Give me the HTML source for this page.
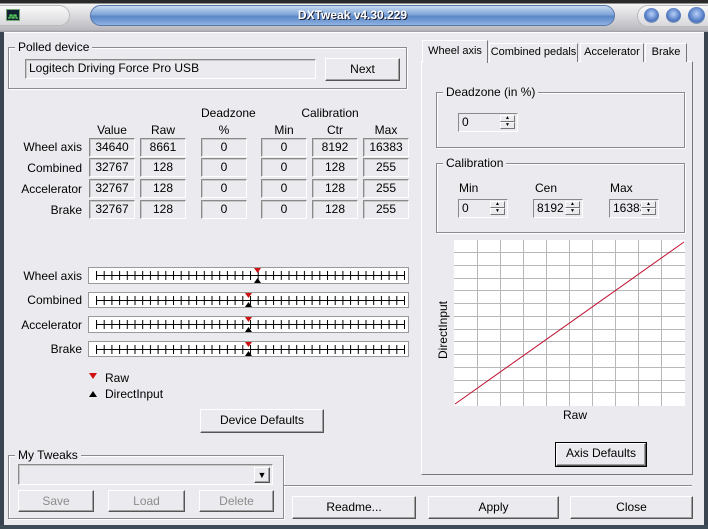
<!DOCTYPE html>
<html><head><meta charset="utf-8"><style>
*{box-sizing:border-box;margin:0;padding:0}
body{width:708px;height:529px;overflow:hidden;background:#3a4450;font-family:"Liberation Sans",sans-serif;font-size:12px;color:#000;position:relative}
.a{position:absolute}
#title{left:0;top:0;width:708px;height:32px;background:linear-gradient(#2a2a2a 0,#2a2a2a 3px,#f4f4f4 4px,#d9d9dd 16px,#b9b9bf 30px,#9a9aa0 32px)}
#pill{left:90px;top:5px;width:525px;height:21px;border-radius:11px;background:linear-gradient(#c8daf2,#7ea4d8 45%,#5a86c6 55%,#8fb2e2);border:1px solid #5a78a8;color:#fff;font-weight:bold;text-align:center;line-height:19px;font-size:12px;text-shadow:1px 1px 0 #223}
#icopill{left:-10px;top:5px;width:80px;height:21px;border-radius:11px;background:linear-gradient(#fafafa,#d8d8dc);border:1px solid #bbb}
#ico{left:6px;top:9px;width:14px;height:12px;background:#123;border:1px solid #7a7;}
#btns{left:637px;top:5px;width:80px;height:22px;border-radius:11px;background:linear-gradient(#fafafa,#d8d8dc);border:1px solid #bbb}
.cb{width:15px;height:15px;border-radius:50%;background:radial-gradient(circle at 50% 40%,#b8d0f8,#4a74c0 60%,#8a9ab0 75%,#ddd 80%);top:8px}
#dlg{left:4px;top:32px;width:700px;height:493px;background:#ebebef;border-top:1px solid #fff}
.grp{position:absolute;border:1px solid #8a8a90;box-shadow:1px 1px 0 #fff, inset 1px 1px 0 #fff}
.gl{position:absolute;background:#ebebef;padding:0 3px;top:-8px;left:6px;line-height:14px;white-space:nowrap}
.tb{position:absolute;border:1px solid #8a8a8a;border-right-color:#fff;border-bottom-color:#fff;box-shadow:inset 1px 1px 0 #c8c8c8;background:#ebebef;text-align:center;line-height:16px;height:19px}
.btn{position:absolute;border:1px solid #fff;border-right-color:#555;border-bottom-color:#555;box-shadow:inset -1px -1px 0 #a0a0a0;background:#ebebef;text-align:center;line-height:20px;white-space:nowrap}
.lab{position:absolute;text-align:right;width:80px;left:0}
.hd{position:absolute;text-align:center;width:46px}
.spin{position:absolute;height:19px;border:1px solid #8a8a8a;border-right-color:#fff;border-bottom-color:#fff;background:#ebebef;padding-left:3px;line-height:17px;overflow:hidden}
.sb{position:absolute;right:2px;width:15px;height:7px;border:1px solid #fff;border-right-color:#777;border-bottom-color:#777;background:#ebebef;font-size:5px;line-height:5px;text-align:center}
.tab{position:absolute;top:43px;height:19px;border:1px solid #fff;border-right-color:#777;border-bottom:none;background:#ebebef;text-align:center;line-height:17px;white-space:nowrap;font-size:11px;overflow:hidden}
.dis{color:#8c8c8c}
</style></head><body>
<div id="title" class="a">
<div id="icopill" class="a"></div>
<div id="ico" class="a"><svg width="12" height="10"><path d="M1 7h2v-3h2v3h2v-3h2v3h2" stroke="#6f6" fill="none"/></svg></div>
<div id="pill" class="a">DXTweak v4.30.229</div>
<div id="btns" class="a"></div>
<div class="a cb" style="left:644px"></div><div class="a cb" style="left:666px"></div><div class="a cb" style="left:688px;width:17px;height:17px;top:7px"></div>
</div>
<div id="dlg" class="a"></div>
<div class="a" style="left:0;top:525px;width:708px;height:4px;background:#3e4c58"></div>

<div class="grp" style="left:8px;top:47px;width:399px;height:42px"><span class="gl">Polled device</span></div>
<div class="tb" style="left:25px;top:59px;width:291px;height:20px;text-align:left;padding-left:3px">Logitech Driving Force Pro USB</div>
<div class="btn" style="left:325px;top:58px;width:75px;height:23px">Next</div>

<div class="hd" style="left:201px;top:106px">Deadzone</div>
<div class="hd" style="left:300px;top:106px;width:60px">Calibration</div>
<div class="hd" style="left:89px;top:123px">Value</div>
<div class="hd" style="left:140px;top:123px">Raw</div>
<div class="hd" style="left:201px;top:123px">%</div>
<div class="hd" style="left:261px;top:123px">Min</div>
<div class="hd" style="left:312px;top:123px">Ctr</div>
<div class="hd" style="left:363px;top:123px">Max</div>

<div class="lab" style="top:140px;left:2px">Wheel axis</div>
<div class="lab" style="top:161px;left:2px">Combined</div>
<div class="lab" style="top:182px;left:2px">Accelerator</div>
<div class="lab" style="top:203px;left:2px">Brake</div>

<div class="tb" style="left:89px;top:138px;width:46px">34640</div>
<div class="tb" style="left:140px;top:138px;width:46px">8661</div>
<div class="tb" style="left:201px;top:138px;width:46px">0</div>
<div class="tb" style="left:261px;top:138px;width:46px">0</div>
<div class="tb" style="left:312px;top:138px;width:46px">8192</div>
<div class="tb" style="left:363px;top:138px;width:46px">16383</div>

<div class="tb" style="left:89px;top:158px;width:46px">32767</div>
<div class="tb" style="left:140px;top:158px;width:46px">128</div>
<div class="tb" style="left:201px;top:158px;width:46px">0</div>
<div class="tb" style="left:261px;top:158px;width:46px">0</div>
<div class="tb" style="left:312px;top:158px;width:46px">128</div>
<div class="tb" style="left:363px;top:158px;width:46px">255</div>

<div class="tb" style="left:89px;top:179px;width:46px">32767</div>
<div class="tb" style="left:140px;top:179px;width:46px">128</div>
<div class="tb" style="left:201px;top:179px;width:46px">0</div>
<div class="tb" style="left:261px;top:179px;width:46px">0</div>
<div class="tb" style="left:312px;top:179px;width:46px">128</div>
<div class="tb" style="left:363px;top:179px;width:46px">255</div>

<div class="tb" style="left:89px;top:200px;width:46px">32767</div>
<div class="tb" style="left:140px;top:200px;width:46px">128</div>
<div class="tb" style="left:201px;top:200px;width:46px">0</div>
<div class="tb" style="left:261px;top:200px;width:46px">0</div>
<div class="tb" style="left:312px;top:200px;width:46px">128</div>
<div class="tb" style="left:363px;top:200px;width:46px">255</div>

<div class="lab" style="top:269px;left:2px">Wheel axis</div>
<div class="lab" style="top:293px;left:2px">Combined</div>
<div class="lab" style="top:318px;left:2px">Accelerator</div>
<div class="lab" style="top:342px;left:2px">Brake</div>
<svg class="a" style="left:0;top:0" width="420" height="400">
<defs><pattern id="tk" x="96" y="0" width="7.7" height="10" patternUnits="userSpaceOnUse"><rect x="0" y="0" width="1" height="10" fill="#000"/></pattern></defs>
<g fill="#fff" stroke="#999"><rect x="88.5" y="267.5" width="320" height="16"/><rect x="88.5" y="292.5" width="320" height="15"/><rect x="88.5" y="316.5" width="320" height="16"/><rect x="88.5" y="341.5" width="320" height="15"/></g>
<g>
<rect x="96" y="275" width="309" height="1" fill="#000"/><rect x="96" y="271" width="309" height="9" fill="url(#tk)"/>
<rect x="96" y="300" width="309" height="1" fill="#000"/><rect x="96" y="296" width="309" height="9" fill="url(#tk)"/>
<rect x="96" y="324" width="309" height="1" fill="#000"/><rect x="96" y="320" width="309" height="9" fill="url(#tk)"/>
<rect x="96" y="349" width="309" height="1" fill="#000"/><rect x="96" y="345" width="309" height="9" fill="url(#tk)"/>
</g>
<g fill="#d01010"><path d="M254 268h7l-3.5 5z"/><path d="M245 293h7l-3.5 5z"/><path d="M245 317h7l-3.5 5z"/><path d="M245 342h7l-3.5 5z"/>
<path d="M89 373h8l-4 6z"/></g>
<g fill="#000"><path d="M254 283h7l-3.5-5z"/><path d="M245 307h7l-3.5-5z"/><path d="M245 332h7l-3.5-5z"/><path d="M245 356h7l-3.5-5z"/>
<path d="M89 397h8l-4-6z"/></g>
</svg>
<div class="a" style="left:105px;top:371px">Raw</div>
<div class="a" style="left:105px;top:387px">DirectInput</div>
<div class="btn" style="left:200px;top:409px;width:124px;height:24px">Device Defaults</div>

<div class="grp" style="left:8px;top:455px;width:276px;height:64px"><span class="gl">My Tweaks</span></div>
<div class="tb" style="left:18px;top:464px;width:255px;height:21px"></div>
<div class="btn" style="left:254px;top:467px;width:16px;height:16px;line-height:14px;font-size:9px">▼</div>
<div class="btn dis" style="left:18px;top:490px;width:76px;height:22px">Save</div>
<div class="btn dis" style="left:108px;top:490px;width:77px;height:22px">Load</div>
<div class="btn dis" style="left:199px;top:490px;width:75px;height:22px">Delete</div>

<div class="a" style="left:284px;top:485px;width:408px;background:#8a8a90;border-bottom:1px solid #fff;height:2px"></div>
<div class="btn" style="left:292px;top:496px;width:124px;height:23px">Readme...</div>
<div class="btn" style="left:428px;top:496px;width:131px;height:23px">Apply</div>
<div class="btn" style="left:570px;top:496px;width:123px;height:23px">Close</div>

<div class="a" style="left:421px;top:61px;width:272px;height:414px;border:1px solid #fff;border-right-color:#777;border-bottom-color:#777;background:#ebebef"></div>
<div class="tab" style="left:489px;width:89px">Combined pedals</div>
<div class="tab" style="left:580px;width:64px">Accelerator</div>
<div class="tab" style="left:645px;width:42px">Brake</div>
<div class="tab" style="left:422px;top:40px;width:66px;height:23px;line-height:21px">Wheel axis</div>

<div class="grp" style="left:436px;top:92px;width:249px;height:56px"><span class="gl">Deadzone (in %)</span></div>
<div class="spin" style="left:458px;top:113px;width:60px">0<div class="sb" style="top:1px">▲</div><div class="sb" style="top:8px">▼</div></div>

<div class="grp" style="left:436px;top:163px;width:249px;height:70px"><span class="gl">Calibration</span></div>
<div class="a" style="left:459px;top:181px">Min</div>
<div class="a" style="left:535px;top:181px">Cen</div>
<div class="a" style="left:610px;top:181px">Max</div>
<div class="spin" style="left:458px;top:199px;width:50px">0<div class="sb" style="top:1px">▲</div><div class="sb" style="top:8px">▼</div></div>
<div class="spin" style="left:533px;top:199px;width:50px">8192<div class="sb" style="top:1px">▲</div><div class="sb" style="top:8px">▼</div></div>
<div class="spin" style="left:609px;top:199px;width:50px">16383<div class="sb" style="top:1px">▲</div><div class="sb" style="top:8px">▼</div></div>

<svg class="a" style="left:454px;top:240px" width="231" height="166">
<rect width="231" height="166" fill="#fff"/>
<g stroke="#b8b8b8" stroke-width="1">
<path d="M23.5 0v166M46.5 0v166M69.5 0v166M92.5 0v166M115.5 0v166M138.5 0v166M161.5 0v166M184.5 0v166M207.5 0v166"/>
<path d="M0 12.5h231M0 25.5h231M0 38.5h231M0 50.5h231M0 63.5h231M0 76.5h231M0 89.5h231M0 101.5h231M0 114.5h231M0 127.5h231M0 140.5h231M0 152.5h231"/>
</g>
<path d="M1 164L230 2" stroke="#c01030" stroke-width="1"/>
</svg>
<div class="a" style="left:405px;top:323px;width:76px;text-align:center;transform:rotate(-90deg)">DirectInput</div>
<div class="a" style="left:563px;top:408px">Raw</div>
<div class="btn" style="left:556px;top:443px;width:90px;height:23px;outline:1px solid #000;line-height:19px">Axis Defaults</div>
</body></html>
